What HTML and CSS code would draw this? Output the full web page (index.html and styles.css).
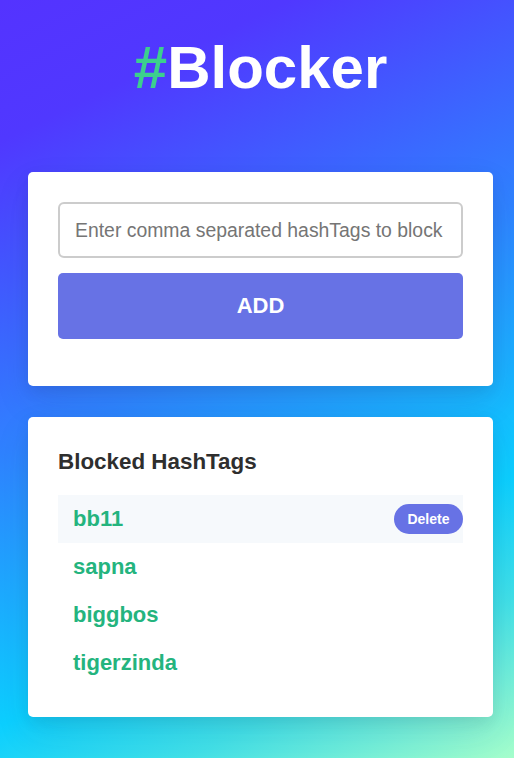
FILE: index.html
```html
<!DOCTYPE html>
<html lang="en">
<head>
<meta charset="utf-8">
<title>#Blocker</title>
<link rel="stylesheet" href="styles.css">
</head>
<body>
<div class="page">
  <h1 class="title"><span class="hash">#</span>Blocker</h1>
  <div class="card add-card">
    <input class="tag-input" type="text" placeholder="Enter comma separated hashTags to block">
    <button class="add-btn" type="button">ADD</button>
  </div>
  <div class="card list-card">
    <h3 class="list-title">Blocked HashTags</h3>
    <ul class="tag-list">
      <li class="tag-row active"><span class="tag-name">bb11</span><button class="delete-btn" type="button">Delete</button></li>
      <li class="tag-row"><span class="tag-name">sapna</span></li>
      <li class="tag-row"><span class="tag-name">biggbos</span></li>
      <li class="tag-row"><span class="tag-name">tigerzinda</span></li>
    </ul>
  </div>
</div>
</body>
</html>
```

FILE: styles.css
```css
html, body {
  margin: 0;
  padding: 0;
}
body {
  min-height: 758px;
  font-family: "Liberation Sans", Arial, sans-serif;
  background: linear-gradient(154deg, #5433ff 0%, #5038ff 14%, #2f82ff 45%, #0ccfff 72%, #40e0e8 84%, #a5fecb 100%);
  background-repeat: no-repeat;
}
.page {
  width: 465px;
  margin-left: 28px;
  padding-top: 33px;
  padding-bottom: 40px;
}
.title {
  margin: 0 0 70px 0;
  text-align: center;
  font-size: 60px;
  line-height: 69px;
  font-weight: bold;
  color: #ffffff;
}
.hash {
  color: #3ccf8e;
}
.card {
  background: #ffffff;
  border-radius: 5px;
  padding: 30px;
  box-shadow: 0 15px 35px rgba(50, 50, 93, 0.1), 0 5px 15px rgba(0, 0, 0, 0.07);
}
.add-card {
  padding-bottom: 47px;
  margin-bottom: 31px;
}
.tag-input {
  display: block;
  box-sizing: border-box;
  width: 100%;
  height: 56px;
  margin: 0;
  padding: 0 10px 0 15px;
  border: 2px solid #cccccc;
  border-radius: 6px;
  font-family: "Liberation Sans", Arial, sans-serif;
  font-size: 19.4px;
  color: #333;
  background: #fff;
  outline: none;
}
.tag-input::placeholder {
  color: #757575;
}
.add-btn {
  display: block;
  width: 100%;
  height: 66px;
  margin-top: 15px;
  border: none;
  border-radius: 5px;
  background: #6772e5;
  color: #ffffff;
  font-family: "Liberation Sans", Arial, sans-serif;
  font-size: 22px;
  font-weight: bold;
  cursor: pointer;
}
.list-title {
  margin: 2px 0 20px 0;
  font-size: 22.4px;
  line-height: 26px;
  font-weight: bold;
  color: #2e2e2e;
}
.tag-list {
  list-style: none;
  margin: 0;
  padding: 0;
}
.tag-row {
  display: flex;
  align-items: center;
  justify-content: space-between;
  height: 48px;
  padding-left: 15px;
}
.tag-row.active {
  background: #f6f9fc;
}
.tag-name {
  font-size: 22px;
  font-weight: bold;
  color: #24b47e;
}
.delete-btn {
  height: 30px;
  padding: 0 13.5px;
  border: none;
  border-radius: 15px;
  background: #6772e5;
  color: #ffffff;
  font-family: "Liberation Sans", Arial, sans-serif;
  font-size: 14px;
  font-weight: bold;
  cursor: pointer;
}
```
